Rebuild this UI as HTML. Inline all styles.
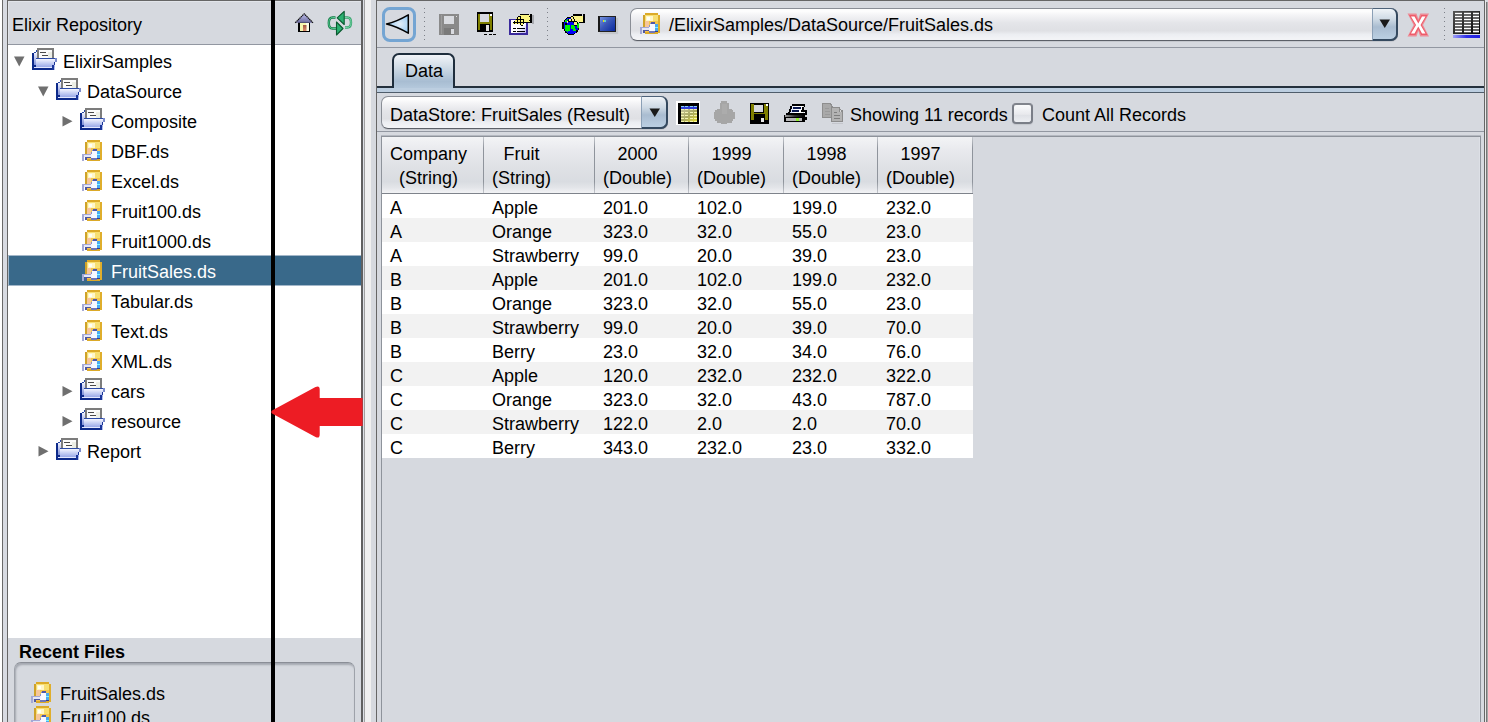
<!DOCTYPE html>
<html><head><meta charset="utf-8">
<style>
*{margin:0;padding:0;box-sizing:border-box}
html,body{width:1488px;height:722px;overflow:hidden;background:#d6d9df;font-family:"Liberation Sans",sans-serif;font-size:18px;color:#000}
.a{position:absolute}
.t{position:absolute;white-space:pre;line-height:24px;font-size:18px}
.r{position:absolute;background:#000}
</style></head><body>
<!-- ===== LEFT PANEL ===== -->
<div class="a" style="left:0;top:0;width:2px;height:722px;background:#fff"></div>
<div class="a" style="left:2px;top:0;width:1px;height:722px;background:#6a6a6a"></div>
<div class="a" style="left:3px;top:0;width:4px;height:722px;background:#d8dbe2"></div>
<div class="a" style="left:7px;top:0;width:1px;height:722px;background:#666"></div>
<div class="a" style="left:7px;top:0;width:355px;height:1px;background:#666"></div>
<div class="a" style="left:8px;top:1px;width:353px;height:43px;background:#d6d9df;border-top:1px solid #e2e5ea;border-left:1px solid #e2e5ea"></div>
<div class="a" style="left:8px;top:44px;width:353px;height:1px;background:#9297a1"></div>
<div class="a" style="left:8px;top:45px;width:353px;height:593px;background:#fff"></div>
<div class="a" style="left:8px;top:638px;width:353px;height:84px;background:#d6d9df"></div>
<div class="a" style="left:361px;top:0;width:2px;height:722px;background:#606060"></div>
<div class="a" style="left:363px;top:0;width:1px;height:722px;background:#dcdfe5"></div>
<div class="a" style="left:364px;top:0;width:1px;height:722px;background:#a0a0a0"></div>
<div class="a" style="left:365px;top:0;width:6px;height:722px;background:#f0f0f0"></div>
<div class="a" style="left:371px;top:0;width:5px;height:722px;background:#d6d9df"></div>
<div class="a" style="left:376px;top:0;width:1px;height:722px;background:#666"></div>

<div class="t" style="left:12px;top:13px">Elixir Repository</div>

<svg class="a" style="left:293px;top:11px" width="22" height="22" viewBox="293 11 22 22">
<defs><linearGradient id="rf" x1="0" y1="0" x2="0" y2="1"><stop offset="0" stop-color="#c0c0f0"/><stop offset="1" stop-color="#6a6a9c"/></linearGradient>
<linearGradient id="dr" x1="0" y1="0" x2="0" y2="1"><stop offset="0" stop-color="#a05840"/><stop offset="1" stop-color="#e09070"/></linearGradient></defs>
<rect x="298" y="22" width="12" height="10" fill="#000"/>
<rect x="300" y="23" width="9" height="8" fill="#f4f6b0"/>
<rect x="306" y="23" width="3" height="8" fill="#fbfde8"/>
<rect x="303" y="25" width="3.5" height="6" fill="url(#dr)"/>
<path d="M295.2,22.8 L304.2,13.8 L313,22.8 Z" fill="url(#rf)"/><path d="M295.2,22.8 L304.2,13.8 L313,22.8" fill="none" stroke="#111" stroke-width="1.2" stroke-dasharray="1.5 0.5"/>
</svg>
<svg class="a" style="left:326px;top:9px" width="28" height="28" viewBox="0 0 28 28">
<path d="M9.5,8.5 H6.5 C3.8,8.5 2.8,11 2.8,14 C2.8,17 3.8,19.5 6.5,19.5 H11" fill="none" stroke="#127a45" stroke-width="2.4"/>
<path d="M9.5,8.5 H6.5 C3.8,8.5 2.8,11 2.8,14 C2.8,17 3.8,19.5 6.5,19.5 H11" fill="none" stroke="#5fd09a" stroke-width="0.9"/>
<path d="M18,8.5 H21.5 C24,8.5 25,11 25,13.5 C25,16 24,18.5 21.5,18.5 H19" fill="none" stroke="#1f9a5c" stroke-width="2.4" opacity="0.85"/>
<path d="M18,8.5 H21.5 C24,8.5 25,11 25,13.5 C25,16 24,18.5 21.5,18.5 H19" fill="none" stroke="#7ad8aa" stroke-width="0.9"/>
<path d="M11.2,8.8 L18.2,2.3 L18.2,15.5 Z" fill="#2bb070" stroke="#0a5a30" stroke-width="1.1" stroke-linejoin="round"/>
<path d="M17,19.5 L10.5,13 L10.5,26 Z" fill="#2bb070" stroke="#0a5a30" stroke-width="1.1" stroke-linejoin="round"/>
</svg>
<!-- tree -->
<svg width="0" height="0" style="position:absolute"><defs><linearGradient id="fg" x1="0" y1="0" x2="0" y2="1"><stop offset="0" stop-color="#f4f6ff"/><stop offset="1" stop-color="#9aaae8"/></linearGradient><linearGradient id="fs" x1="0" y1="0" x2="0" y2="1"><stop offset="0" stop-color="#f0f2ff"/><stop offset="1" stop-color="#7f90d8"/></linearGradient></defs></svg><svg class="a" style="left:14px;top:56px" width="11" height="11" viewBox="0 0 11 11"><path d="M0,0.5 L10.5,0.5 L5.25,10.5 Z" fill="#6f6f6f"/></svg>
<svg class="a" style="left:32px;top:48px" width="26" height="23" viewBox="0 0 26 23" shape-rendering="crispEdges">
<rect x="5" y="0" width="17" height="11" fill="#7c7c7c"/>
<rect x="7" y="2" width="13" height="9" fill="#fbfbfb"/>
<rect x="16" y="4" width="4" height="6" fill="#eceee6"/>
<rect x="8" y="4" width="6" height="1" fill="#4a4a4a"/>
<rect x="10" y="7" width="6" height="1" fill="#4a4a4a"/>
<rect x="4" y="2" width="1" height="2" fill="#2b4aa5"/>
<rect x="2" y="4" width="2" height="1" fill="#2b4aa5"/>
<rect x="0" y="5" width="2" height="17" fill="#0d2a8a"/>
<rect x="2" y="5" width="3" height="12" fill="url(#fs)"/>
<rect x="2" y="17" width="2" height="2" fill="#0d2a8a"/>
<rect x="4" y="10" width="21" height="1" fill="#2b4aa5"/>
<rect x="4" y="11" width="19" height="8" fill="url(#fg)"/>
<rect x="2" y="19" width="19" height="1" fill="#e4e8ff"/>
<rect x="23" y="10" width="2" height="4" fill="#7a8acb"/>
<rect x="22" y="14" width="1" height="3" fill="#1a3599"/>
<rect x="20" y="17" width="2" height="5" fill="#1a3599"/>
<rect x="22" y="19" width="1" height="3" fill="#b4c0ee"/>
<rect x="0" y="20" width="20" height="2" fill="#0d2a8a"/>
</svg>
<div class="t" style="left:63px;top:50px;color:#000">ElixirSamples</div>
<svg class="a" style="left:38px;top:86px" width="11" height="11" viewBox="0 0 11 11"><path d="M0,0.5 L10.5,0.5 L5.25,10.5 Z" fill="#6f6f6f"/></svg>
<svg class="a" style="left:56px;top:78px" width="26" height="23" viewBox="0 0 26 23" shape-rendering="crispEdges">
<rect x="5" y="0" width="17" height="11" fill="#7c7c7c"/>
<rect x="7" y="2" width="13" height="9" fill="#fbfbfb"/>
<rect x="16" y="4" width="4" height="6" fill="#eceee6"/>
<rect x="8" y="4" width="6" height="1" fill="#4a4a4a"/>
<rect x="10" y="7" width="6" height="1" fill="#4a4a4a"/>
<rect x="4" y="2" width="1" height="2" fill="#2b4aa5"/>
<rect x="2" y="4" width="2" height="1" fill="#2b4aa5"/>
<rect x="0" y="5" width="2" height="17" fill="#0d2a8a"/>
<rect x="2" y="5" width="3" height="12" fill="url(#fs)"/>
<rect x="2" y="17" width="2" height="2" fill="#0d2a8a"/>
<rect x="4" y="10" width="21" height="1" fill="#2b4aa5"/>
<rect x="4" y="11" width="19" height="8" fill="url(#fg)"/>
<rect x="2" y="19" width="19" height="1" fill="#e4e8ff"/>
<rect x="23" y="10" width="2" height="4" fill="#7a8acb"/>
<rect x="22" y="14" width="1" height="3" fill="#1a3599"/>
<rect x="20" y="17" width="2" height="5" fill="#1a3599"/>
<rect x="22" y="19" width="1" height="3" fill="#b4c0ee"/>
<rect x="0" y="20" width="20" height="2" fill="#0d2a8a"/>
</svg>
<div class="t" style="left:87px;top:80px;color:#000">DataSource</div>
<svg class="a" style="left:62px;top:116px" width="11" height="11" viewBox="0 0 11 11"><path d="M0.5,0 L10.5,5.25 L0.5,10.5 Z" fill="#6f6f6f"/></svg>
<svg class="a" style="left:80px;top:108px" width="26" height="23" viewBox="0 0 26 23" shape-rendering="crispEdges">
<rect x="5" y="0" width="17" height="11" fill="#7c7c7c"/>
<rect x="7" y="2" width="13" height="9" fill="#fbfbfb"/>
<rect x="16" y="4" width="4" height="6" fill="#eceee6"/>
<rect x="8" y="4" width="6" height="1" fill="#4a4a4a"/>
<rect x="10" y="7" width="6" height="1" fill="#4a4a4a"/>
<rect x="4" y="2" width="1" height="2" fill="#2b4aa5"/>
<rect x="2" y="4" width="2" height="1" fill="#2b4aa5"/>
<rect x="0" y="5" width="2" height="17" fill="#0d2a8a"/>
<rect x="2" y="5" width="3" height="12" fill="url(#fs)"/>
<rect x="2" y="17" width="2" height="2" fill="#0d2a8a"/>
<rect x="4" y="10" width="21" height="1" fill="#2b4aa5"/>
<rect x="4" y="11" width="19" height="8" fill="url(#fg)"/>
<rect x="2" y="19" width="19" height="1" fill="#e4e8ff"/>
<rect x="23" y="10" width="2" height="4" fill="#7a8acb"/>
<rect x="22" y="14" width="1" height="3" fill="#1a3599"/>
<rect x="20" y="17" width="2" height="5" fill="#1a3599"/>
<rect x="22" y="19" width="1" height="3" fill="#b4c0ee"/>
<rect x="0" y="20" width="20" height="2" fill="#0d2a8a"/>
</svg>
<div class="t" style="left:111px;top:110px;color:#000">Composite</div>
<svg class="a" style="left:82px;top:140px" width="21" height="22" viewBox="0 0 21 22" shape-rendering="crispEdges">
<rect x="5" y="0" width="13" height="2" fill="#dcaa28"/>
<rect x="3" y="2" width="2" height="18" fill="#cfa22a"/>
<rect x="18" y="2" width="2" height="18" fill="#dfae2c"/>
<rect x="5" y="2" width="13" height="7" fill="#f7df72"/>
<rect x="6" y="3" width="7" height="5" fill="#fff6c8"/>
<rect x="7" y="4" width="3" height="3" fill="#fffff4"/>
<rect x="5" y="8" width="13" height="11" fill="#f2c64c"/>
<rect x="5" y="8" width="4" height="6" fill="#f6c79c"/>
<rect x="5" y="19" width="13" height="2" fill="#dcaa28"/>
<rect x="11" y="9" width="4" height="2" fill="#5058a8"/>
<rect x="10" y="10" width="1" height="2" fill="#8a92cc"/>
<rect x="9" y="12" width="1" height="2" fill="#8a92cc"/>
<rect x="10" y="11" width="5" height="8" fill="#f8f8ff"/>
<rect x="9" y="14" width="1" height="5" fill="#f0f0ff"/>
<rect x="15" y="11" width="3" height="8" fill="#4aa8f0"/>
<rect x="15" y="14" width="3" height="1" fill="#80f6ff"/>
<rect x="15" y="18" width="3" height="1" fill="#343c90"/>
<rect x="9" y="18" width="6" height="2" fill="#7078b8"/>
<rect x="0" y="14" width="9" height="1" fill="#a4a8d6"/>
<rect x="0" y="15" width="2" height="6" fill="#a4a8d6"/>
<rect x="2" y="15" width="7" height="2" fill="#e6e8f8"/>
<rect x="3" y="17" width="6" height="1" fill="#5058a0"/>
<rect x="3" y="18" width="2" height="2" fill="#5058a0"/>
<rect x="5" y="18" width="4" height="1" fill="#f6c050"/>
</svg>
<div class="t" style="left:111px;top:140px;color:#000">DBF.ds</div>
<svg class="a" style="left:82px;top:170px" width="21" height="22" viewBox="0 0 21 22" shape-rendering="crispEdges">
<rect x="5" y="0" width="13" height="2" fill="#dcaa28"/>
<rect x="3" y="2" width="2" height="18" fill="#cfa22a"/>
<rect x="18" y="2" width="2" height="18" fill="#dfae2c"/>
<rect x="5" y="2" width="13" height="7" fill="#f7df72"/>
<rect x="6" y="3" width="7" height="5" fill="#fff6c8"/>
<rect x="7" y="4" width="3" height="3" fill="#fffff4"/>
<rect x="5" y="8" width="13" height="11" fill="#f2c64c"/>
<rect x="5" y="8" width="4" height="6" fill="#f6c79c"/>
<rect x="5" y="19" width="13" height="2" fill="#dcaa28"/>
<rect x="11" y="9" width="4" height="2" fill="#5058a8"/>
<rect x="10" y="10" width="1" height="2" fill="#8a92cc"/>
<rect x="9" y="12" width="1" height="2" fill="#8a92cc"/>
<rect x="10" y="11" width="5" height="8" fill="#f8f8ff"/>
<rect x="9" y="14" width="1" height="5" fill="#f0f0ff"/>
<rect x="15" y="11" width="3" height="8" fill="#4aa8f0"/>
<rect x="15" y="14" width="3" height="1" fill="#80f6ff"/>
<rect x="15" y="18" width="3" height="1" fill="#343c90"/>
<rect x="9" y="18" width="6" height="2" fill="#7078b8"/>
<rect x="0" y="14" width="9" height="1" fill="#a4a8d6"/>
<rect x="0" y="15" width="2" height="6" fill="#a4a8d6"/>
<rect x="2" y="15" width="7" height="2" fill="#e6e8f8"/>
<rect x="3" y="17" width="6" height="1" fill="#5058a0"/>
<rect x="3" y="18" width="2" height="2" fill="#5058a0"/>
<rect x="5" y="18" width="4" height="1" fill="#f6c050"/>
</svg>
<div class="t" style="left:111px;top:170px;color:#000">Excel.ds</div>
<svg class="a" style="left:82px;top:200px" width="21" height="22" viewBox="0 0 21 22" shape-rendering="crispEdges">
<rect x="5" y="0" width="13" height="2" fill="#dcaa28"/>
<rect x="3" y="2" width="2" height="18" fill="#cfa22a"/>
<rect x="18" y="2" width="2" height="18" fill="#dfae2c"/>
<rect x="5" y="2" width="13" height="7" fill="#f7df72"/>
<rect x="6" y="3" width="7" height="5" fill="#fff6c8"/>
<rect x="7" y="4" width="3" height="3" fill="#fffff4"/>
<rect x="5" y="8" width="13" height="11" fill="#f2c64c"/>
<rect x="5" y="8" width="4" height="6" fill="#f6c79c"/>
<rect x="5" y="19" width="13" height="2" fill="#dcaa28"/>
<rect x="11" y="9" width="4" height="2" fill="#5058a8"/>
<rect x="10" y="10" width="1" height="2" fill="#8a92cc"/>
<rect x="9" y="12" width="1" height="2" fill="#8a92cc"/>
<rect x="10" y="11" width="5" height="8" fill="#f8f8ff"/>
<rect x="9" y="14" width="1" height="5" fill="#f0f0ff"/>
<rect x="15" y="11" width="3" height="8" fill="#4aa8f0"/>
<rect x="15" y="14" width="3" height="1" fill="#80f6ff"/>
<rect x="15" y="18" width="3" height="1" fill="#343c90"/>
<rect x="9" y="18" width="6" height="2" fill="#7078b8"/>
<rect x="0" y="14" width="9" height="1" fill="#a4a8d6"/>
<rect x="0" y="15" width="2" height="6" fill="#a4a8d6"/>
<rect x="2" y="15" width="7" height="2" fill="#e6e8f8"/>
<rect x="3" y="17" width="6" height="1" fill="#5058a0"/>
<rect x="3" y="18" width="2" height="2" fill="#5058a0"/>
<rect x="5" y="18" width="4" height="1" fill="#f6c050"/>
</svg>
<div class="t" style="left:111px;top:200px;color:#000">Fruit100.ds</div>
<svg class="a" style="left:82px;top:230px" width="21" height="22" viewBox="0 0 21 22" shape-rendering="crispEdges">
<rect x="5" y="0" width="13" height="2" fill="#dcaa28"/>
<rect x="3" y="2" width="2" height="18" fill="#cfa22a"/>
<rect x="18" y="2" width="2" height="18" fill="#dfae2c"/>
<rect x="5" y="2" width="13" height="7" fill="#f7df72"/>
<rect x="6" y="3" width="7" height="5" fill="#fff6c8"/>
<rect x="7" y="4" width="3" height="3" fill="#fffff4"/>
<rect x="5" y="8" width="13" height="11" fill="#f2c64c"/>
<rect x="5" y="8" width="4" height="6" fill="#f6c79c"/>
<rect x="5" y="19" width="13" height="2" fill="#dcaa28"/>
<rect x="11" y="9" width="4" height="2" fill="#5058a8"/>
<rect x="10" y="10" width="1" height="2" fill="#8a92cc"/>
<rect x="9" y="12" width="1" height="2" fill="#8a92cc"/>
<rect x="10" y="11" width="5" height="8" fill="#f8f8ff"/>
<rect x="9" y="14" width="1" height="5" fill="#f0f0ff"/>
<rect x="15" y="11" width="3" height="8" fill="#4aa8f0"/>
<rect x="15" y="14" width="3" height="1" fill="#80f6ff"/>
<rect x="15" y="18" width="3" height="1" fill="#343c90"/>
<rect x="9" y="18" width="6" height="2" fill="#7078b8"/>
<rect x="0" y="14" width="9" height="1" fill="#a4a8d6"/>
<rect x="0" y="15" width="2" height="6" fill="#a4a8d6"/>
<rect x="2" y="15" width="7" height="2" fill="#e6e8f8"/>
<rect x="3" y="17" width="6" height="1" fill="#5058a0"/>
<rect x="3" y="18" width="2" height="2" fill="#5058a0"/>
<rect x="5" y="18" width="4" height="1" fill="#f6c050"/>
</svg>
<div class="t" style="left:111px;top:230px;color:#000">Fruit1000.ds</div>
<div class="a" style="left:8px;top:255px;width:353px;height:31px;background:#a3b7c9"></div>
<div class="a" style="left:9px;top:256px;width:352px;height:29px;background:#39698a"></div>
<svg class="a" style="left:82px;top:260px" width="21" height="22" viewBox="0 0 21 22" shape-rendering="crispEdges">
<rect x="5" y="0" width="13" height="2" fill="#dcaa28"/>
<rect x="3" y="2" width="2" height="18" fill="#cfa22a"/>
<rect x="18" y="2" width="2" height="18" fill="#dfae2c"/>
<rect x="5" y="2" width="13" height="7" fill="#f7df72"/>
<rect x="6" y="3" width="7" height="5" fill="#fff6c8"/>
<rect x="7" y="4" width="3" height="3" fill="#fffff4"/>
<rect x="5" y="8" width="13" height="11" fill="#f2c64c"/>
<rect x="5" y="8" width="4" height="6" fill="#f6c79c"/>
<rect x="5" y="19" width="13" height="2" fill="#dcaa28"/>
<rect x="11" y="9" width="4" height="2" fill="#5058a8"/>
<rect x="10" y="10" width="1" height="2" fill="#8a92cc"/>
<rect x="9" y="12" width="1" height="2" fill="#8a92cc"/>
<rect x="10" y="11" width="5" height="8" fill="#f8f8ff"/>
<rect x="9" y="14" width="1" height="5" fill="#f0f0ff"/>
<rect x="15" y="11" width="3" height="8" fill="#4aa8f0"/>
<rect x="15" y="14" width="3" height="1" fill="#80f6ff"/>
<rect x="15" y="18" width="3" height="1" fill="#343c90"/>
<rect x="9" y="18" width="6" height="2" fill="#7078b8"/>
<rect x="0" y="14" width="9" height="1" fill="#a4a8d6"/>
<rect x="0" y="15" width="2" height="6" fill="#a4a8d6"/>
<rect x="2" y="15" width="7" height="2" fill="#e6e8f8"/>
<rect x="3" y="17" width="6" height="1" fill="#5058a0"/>
<rect x="3" y="18" width="2" height="2" fill="#5058a0"/>
<rect x="5" y="18" width="4" height="1" fill="#f6c050"/>
</svg>
<div class="t" style="left:111px;top:260px;color:#fff">FruitSales.ds</div>
<svg class="a" style="left:82px;top:290px" width="21" height="22" viewBox="0 0 21 22" shape-rendering="crispEdges">
<rect x="5" y="0" width="13" height="2" fill="#dcaa28"/>
<rect x="3" y="2" width="2" height="18" fill="#cfa22a"/>
<rect x="18" y="2" width="2" height="18" fill="#dfae2c"/>
<rect x="5" y="2" width="13" height="7" fill="#f7df72"/>
<rect x="6" y="3" width="7" height="5" fill="#fff6c8"/>
<rect x="7" y="4" width="3" height="3" fill="#fffff4"/>
<rect x="5" y="8" width="13" height="11" fill="#f2c64c"/>
<rect x="5" y="8" width="4" height="6" fill="#f6c79c"/>
<rect x="5" y="19" width="13" height="2" fill="#dcaa28"/>
<rect x="11" y="9" width="4" height="2" fill="#5058a8"/>
<rect x="10" y="10" width="1" height="2" fill="#8a92cc"/>
<rect x="9" y="12" width="1" height="2" fill="#8a92cc"/>
<rect x="10" y="11" width="5" height="8" fill="#f8f8ff"/>
<rect x="9" y="14" width="1" height="5" fill="#f0f0ff"/>
<rect x="15" y="11" width="3" height="8" fill="#4aa8f0"/>
<rect x="15" y="14" width="3" height="1" fill="#80f6ff"/>
<rect x="15" y="18" width="3" height="1" fill="#343c90"/>
<rect x="9" y="18" width="6" height="2" fill="#7078b8"/>
<rect x="0" y="14" width="9" height="1" fill="#a4a8d6"/>
<rect x="0" y="15" width="2" height="6" fill="#a4a8d6"/>
<rect x="2" y="15" width="7" height="2" fill="#e6e8f8"/>
<rect x="3" y="17" width="6" height="1" fill="#5058a0"/>
<rect x="3" y="18" width="2" height="2" fill="#5058a0"/>
<rect x="5" y="18" width="4" height="1" fill="#f6c050"/>
</svg>
<div class="t" style="left:111px;top:290px;color:#000">Tabular.ds</div>
<svg class="a" style="left:82px;top:320px" width="21" height="22" viewBox="0 0 21 22" shape-rendering="crispEdges">
<rect x="5" y="0" width="13" height="2" fill="#dcaa28"/>
<rect x="3" y="2" width="2" height="18" fill="#cfa22a"/>
<rect x="18" y="2" width="2" height="18" fill="#dfae2c"/>
<rect x="5" y="2" width="13" height="7" fill="#f7df72"/>
<rect x="6" y="3" width="7" height="5" fill="#fff6c8"/>
<rect x="7" y="4" width="3" height="3" fill="#fffff4"/>
<rect x="5" y="8" width="13" height="11" fill="#f2c64c"/>
<rect x="5" y="8" width="4" height="6" fill="#f6c79c"/>
<rect x="5" y="19" width="13" height="2" fill="#dcaa28"/>
<rect x="11" y="9" width="4" height="2" fill="#5058a8"/>
<rect x="10" y="10" width="1" height="2" fill="#8a92cc"/>
<rect x="9" y="12" width="1" height="2" fill="#8a92cc"/>
<rect x="10" y="11" width="5" height="8" fill="#f8f8ff"/>
<rect x="9" y="14" width="1" height="5" fill="#f0f0ff"/>
<rect x="15" y="11" width="3" height="8" fill="#4aa8f0"/>
<rect x="15" y="14" width="3" height="1" fill="#80f6ff"/>
<rect x="15" y="18" width="3" height="1" fill="#343c90"/>
<rect x="9" y="18" width="6" height="2" fill="#7078b8"/>
<rect x="0" y="14" width="9" height="1" fill="#a4a8d6"/>
<rect x="0" y="15" width="2" height="6" fill="#a4a8d6"/>
<rect x="2" y="15" width="7" height="2" fill="#e6e8f8"/>
<rect x="3" y="17" width="6" height="1" fill="#5058a0"/>
<rect x="3" y="18" width="2" height="2" fill="#5058a0"/>
<rect x="5" y="18" width="4" height="1" fill="#f6c050"/>
</svg>
<div class="t" style="left:111px;top:320px;color:#000">Text.ds</div>
<svg class="a" style="left:82px;top:350px" width="21" height="22" viewBox="0 0 21 22" shape-rendering="crispEdges">
<rect x="5" y="0" width="13" height="2" fill="#dcaa28"/>
<rect x="3" y="2" width="2" height="18" fill="#cfa22a"/>
<rect x="18" y="2" width="2" height="18" fill="#dfae2c"/>
<rect x="5" y="2" width="13" height="7" fill="#f7df72"/>
<rect x="6" y="3" width="7" height="5" fill="#fff6c8"/>
<rect x="7" y="4" width="3" height="3" fill="#fffff4"/>
<rect x="5" y="8" width="13" height="11" fill="#f2c64c"/>
<rect x="5" y="8" width="4" height="6" fill="#f6c79c"/>
<rect x="5" y="19" width="13" height="2" fill="#dcaa28"/>
<rect x="11" y="9" width="4" height="2" fill="#5058a8"/>
<rect x="10" y="10" width="1" height="2" fill="#8a92cc"/>
<rect x="9" y="12" width="1" height="2" fill="#8a92cc"/>
<rect x="10" y="11" width="5" height="8" fill="#f8f8ff"/>
<rect x="9" y="14" width="1" height="5" fill="#f0f0ff"/>
<rect x="15" y="11" width="3" height="8" fill="#4aa8f0"/>
<rect x="15" y="14" width="3" height="1" fill="#80f6ff"/>
<rect x="15" y="18" width="3" height="1" fill="#343c90"/>
<rect x="9" y="18" width="6" height="2" fill="#7078b8"/>
<rect x="0" y="14" width="9" height="1" fill="#a4a8d6"/>
<rect x="0" y="15" width="2" height="6" fill="#a4a8d6"/>
<rect x="2" y="15" width="7" height="2" fill="#e6e8f8"/>
<rect x="3" y="17" width="6" height="1" fill="#5058a0"/>
<rect x="3" y="18" width="2" height="2" fill="#5058a0"/>
<rect x="5" y="18" width="4" height="1" fill="#f6c050"/>
</svg>
<div class="t" style="left:111px;top:350px;color:#000">XML.ds</div>
<svg class="a" style="left:62px;top:386px" width="11" height="11" viewBox="0 0 11 11"><path d="M0.5,0 L10.5,5.25 L0.5,10.5 Z" fill="#6f6f6f"/></svg>
<svg class="a" style="left:80px;top:378px" width="26" height="23" viewBox="0 0 26 23" shape-rendering="crispEdges">
<rect x="5" y="0" width="17" height="11" fill="#7c7c7c"/>
<rect x="7" y="2" width="13" height="9" fill="#fbfbfb"/>
<rect x="16" y="4" width="4" height="6" fill="#eceee6"/>
<rect x="8" y="4" width="6" height="1" fill="#4a4a4a"/>
<rect x="10" y="7" width="6" height="1" fill="#4a4a4a"/>
<rect x="4" y="2" width="1" height="2" fill="#2b4aa5"/>
<rect x="2" y="4" width="2" height="1" fill="#2b4aa5"/>
<rect x="0" y="5" width="2" height="17" fill="#0d2a8a"/>
<rect x="2" y="5" width="3" height="12" fill="url(#fs)"/>
<rect x="2" y="17" width="2" height="2" fill="#0d2a8a"/>
<rect x="4" y="10" width="21" height="1" fill="#2b4aa5"/>
<rect x="4" y="11" width="19" height="8" fill="url(#fg)"/>
<rect x="2" y="19" width="19" height="1" fill="#e4e8ff"/>
<rect x="23" y="10" width="2" height="4" fill="#7a8acb"/>
<rect x="22" y="14" width="1" height="3" fill="#1a3599"/>
<rect x="20" y="17" width="2" height="5" fill="#1a3599"/>
<rect x="22" y="19" width="1" height="3" fill="#b4c0ee"/>
<rect x="0" y="20" width="20" height="2" fill="#0d2a8a"/>
</svg>
<div class="t" style="left:111px;top:380px;color:#000">cars</div>
<svg class="a" style="left:62px;top:416px" width="11" height="11" viewBox="0 0 11 11"><path d="M0.5,0 L10.5,5.25 L0.5,10.5 Z" fill="#6f6f6f"/></svg>
<svg class="a" style="left:80px;top:408px" width="26" height="23" viewBox="0 0 26 23" shape-rendering="crispEdges">
<rect x="5" y="0" width="17" height="11" fill="#7c7c7c"/>
<rect x="7" y="2" width="13" height="9" fill="#fbfbfb"/>
<rect x="16" y="4" width="4" height="6" fill="#eceee6"/>
<rect x="8" y="4" width="6" height="1" fill="#4a4a4a"/>
<rect x="10" y="7" width="6" height="1" fill="#4a4a4a"/>
<rect x="4" y="2" width="1" height="2" fill="#2b4aa5"/>
<rect x="2" y="4" width="2" height="1" fill="#2b4aa5"/>
<rect x="0" y="5" width="2" height="17" fill="#0d2a8a"/>
<rect x="2" y="5" width="3" height="12" fill="url(#fs)"/>
<rect x="2" y="17" width="2" height="2" fill="#0d2a8a"/>
<rect x="4" y="10" width="21" height="1" fill="#2b4aa5"/>
<rect x="4" y="11" width="19" height="8" fill="url(#fg)"/>
<rect x="2" y="19" width="19" height="1" fill="#e4e8ff"/>
<rect x="23" y="10" width="2" height="4" fill="#7a8acb"/>
<rect x="22" y="14" width="1" height="3" fill="#1a3599"/>
<rect x="20" y="17" width="2" height="5" fill="#1a3599"/>
<rect x="22" y="19" width="1" height="3" fill="#b4c0ee"/>
<rect x="0" y="20" width="20" height="2" fill="#0d2a8a"/>
</svg>
<div class="t" style="left:111px;top:410px;color:#000">resource</div>
<svg class="a" style="left:38px;top:446px" width="11" height="11" viewBox="0 0 11 11"><path d="M0.5,0 L10.5,5.25 L0.5,10.5 Z" fill="#6f6f6f"/></svg>
<svg class="a" style="left:56px;top:438px" width="26" height="23" viewBox="0 0 26 23" shape-rendering="crispEdges">
<rect x="5" y="0" width="17" height="11" fill="#7c7c7c"/>
<rect x="7" y="2" width="13" height="9" fill="#fbfbfb"/>
<rect x="16" y="4" width="4" height="6" fill="#eceee6"/>
<rect x="8" y="4" width="6" height="1" fill="#4a4a4a"/>
<rect x="10" y="7" width="6" height="1" fill="#4a4a4a"/>
<rect x="4" y="2" width="1" height="2" fill="#2b4aa5"/>
<rect x="2" y="4" width="2" height="1" fill="#2b4aa5"/>
<rect x="0" y="5" width="2" height="17" fill="#0d2a8a"/>
<rect x="2" y="5" width="3" height="12" fill="url(#fs)"/>
<rect x="2" y="17" width="2" height="2" fill="#0d2a8a"/>
<rect x="4" y="10" width="21" height="1" fill="#2b4aa5"/>
<rect x="4" y="11" width="19" height="8" fill="url(#fg)"/>
<rect x="2" y="19" width="19" height="1" fill="#e4e8ff"/>
<rect x="23" y="10" width="2" height="4" fill="#7a8acb"/>
<rect x="22" y="14" width="1" height="3" fill="#1a3599"/>
<rect x="20" y="17" width="2" height="5" fill="#1a3599"/>
<rect x="22" y="19" width="1" height="3" fill="#b4c0ee"/>
<rect x="0" y="20" width="20" height="2" fill="#0d2a8a"/>
</svg>
<div class="t" style="left:87px;top:440px;color:#000">Report</div>
<div class="t" style="left:19px;top:640px;font-weight:bold">Recent Files</div>
<div class="a" style="left:14px;top:662px;width:341px;height:80px;border:1px solid #9ea2aa;border-top-color:#8a8e96;border-radius:7px;background:#d6d9df;box-shadow:inset 1px 2px 2px #a4a8b0"></div>
<svg class="a" style="left:31px;top:682px" width="21" height="22" viewBox="0 0 21 22" shape-rendering="crispEdges">
<rect x="5" y="0" width="13" height="2" fill="#dcaa28"/>
<rect x="3" y="2" width="2" height="18" fill="#cfa22a"/>
<rect x="18" y="2" width="2" height="18" fill="#dfae2c"/>
<rect x="5" y="2" width="13" height="7" fill="#f7df72"/>
<rect x="6" y="3" width="7" height="5" fill="#fff6c8"/>
<rect x="7" y="4" width="3" height="3" fill="#fffff4"/>
<rect x="5" y="8" width="13" height="11" fill="#f2c64c"/>
<rect x="5" y="8" width="4" height="6" fill="#f6c79c"/>
<rect x="5" y="19" width="13" height="2" fill="#dcaa28"/>
<rect x="11" y="9" width="4" height="2" fill="#5058a8"/>
<rect x="10" y="10" width="1" height="2" fill="#8a92cc"/>
<rect x="9" y="12" width="1" height="2" fill="#8a92cc"/>
<rect x="10" y="11" width="5" height="8" fill="#f8f8ff"/>
<rect x="9" y="14" width="1" height="5" fill="#f0f0ff"/>
<rect x="15" y="11" width="3" height="8" fill="#4aa8f0"/>
<rect x="15" y="14" width="3" height="1" fill="#80f6ff"/>
<rect x="15" y="18" width="3" height="1" fill="#343c90"/>
<rect x="9" y="18" width="6" height="2" fill="#7078b8"/>
<rect x="0" y="14" width="9" height="1" fill="#a4a8d6"/>
<rect x="0" y="15" width="2" height="6" fill="#a4a8d6"/>
<rect x="2" y="15" width="7" height="2" fill="#e6e8f8"/>
<rect x="3" y="17" width="6" height="1" fill="#5058a0"/>
<rect x="3" y="18" width="2" height="2" fill="#5058a0"/>
<rect x="5" y="18" width="4" height="1" fill="#f6c050"/>
</svg>
<div class="t" style="left:60px;top:682px">FruitSales.ds</div>
<svg class="a" style="left:31px;top:706px" width="21" height="22" viewBox="0 0 21 22" shape-rendering="crispEdges">
<rect x="5" y="0" width="13" height="2" fill="#dcaa28"/>
<rect x="3" y="2" width="2" height="18" fill="#cfa22a"/>
<rect x="18" y="2" width="2" height="18" fill="#dfae2c"/>
<rect x="5" y="2" width="13" height="7" fill="#f7df72"/>
<rect x="6" y="3" width="7" height="5" fill="#fff6c8"/>
<rect x="7" y="4" width="3" height="3" fill="#fffff4"/>
<rect x="5" y="8" width="13" height="11" fill="#f2c64c"/>
<rect x="5" y="8" width="4" height="6" fill="#f6c79c"/>
<rect x="5" y="19" width="13" height="2" fill="#dcaa28"/>
<rect x="11" y="9" width="4" height="2" fill="#5058a8"/>
<rect x="10" y="10" width="1" height="2" fill="#8a92cc"/>
<rect x="9" y="12" width="1" height="2" fill="#8a92cc"/>
<rect x="10" y="11" width="5" height="8" fill="#f8f8ff"/>
<rect x="9" y="14" width="1" height="5" fill="#f0f0ff"/>
<rect x="15" y="11" width="3" height="8" fill="#4aa8f0"/>
<rect x="15" y="14" width="3" height="1" fill="#80f6ff"/>
<rect x="15" y="18" width="3" height="1" fill="#343c90"/>
<rect x="9" y="18" width="6" height="2" fill="#7078b8"/>
<rect x="0" y="14" width="9" height="1" fill="#a4a8d6"/>
<rect x="0" y="15" width="2" height="6" fill="#a4a8d6"/>
<rect x="2" y="15" width="7" height="2" fill="#e6e8f8"/>
<rect x="3" y="17" width="6" height="1" fill="#5058a0"/>
<rect x="3" y="18" width="2" height="2" fill="#5058a0"/>
<rect x="5" y="18" width="4" height="1" fill="#f6c050"/>
</svg>
<div class="t" style="left:60px;top:706px">Fruit100.ds</div>

<!-- ===== RIGHT PANEL ===== -->
<div class="a" style="left:377px;top:0;width:1107px;height:1px;background:#666"></div>
<div class="a" style="left:377px;top:47px;width:1107px;height:1px;background:#9297a1"></div>
<div class="a" style="left:1484px;top:0;width:1px;height:722px;background:#666"></div>
<div class="a" style="left:1485px;top:0;width:1px;height:722px;background:#e8e8e8"></div>
<div class="a" style="left:1486px;top:2px;width:1px;height:720px;background:#777"></div>
<div class="a" style="left:1487px;top:2px;width:1px;height:720px;background:#a8a8a8"></div>

<div class="a" style="left:382px;top:7px;width:34px;height:35px;border:3px solid #74a5d3;border-radius:8px"></div>
<svg class="a" style="left:380px;top:10px" width="34" height="28" viewBox="380 10 34 28"><defs><radialGradient id="bk" cx="0.6" cy="0.5" r="0.6"><stop offset="0" stop-color="#e4eef8"/><stop offset="1" stop-color="#90c8f4"/></radialGradient></defs><path d="M386.5,24 Q397,21.5 408.3,14.8 L408.3,33.2 Q397,26.5 386.5,24 Z" fill="url(#bk)" stroke="#000" stroke-width="1.5" stroke-linejoin="round"/></svg>
<div class="a" style="left:424px;top:8px;width:1px;height:1px;background:#7d8189"></div><div class="a" style="left:424px;top:12px;width:1px;height:1px;background:#7d8189"></div><div class="a" style="left:424px;top:17px;width:1px;height:1px;background:#7d8189"></div><div class="a" style="left:424px;top:21px;width:1px;height:1px;background:#7d8189"></div><div class="a" style="left:424px;top:26px;width:1px;height:1px;background:#7d8189"></div><div class="a" style="left:424px;top:30px;width:1px;height:1px;background:#7d8189"></div><div class="a" style="left:424px;top:35px;width:1px;height:1px;background:#7d8189"></div><div class="a" style="left:424px;top:39px;width:1px;height:1px;background:#7d8189"></div>
<div class="a" style="left:547px;top:8px;width:1px;height:1px;background:#7d8189"></div><div class="a" style="left:547px;top:12px;width:1px;height:1px;background:#7d8189"></div><div class="a" style="left:547px;top:17px;width:1px;height:1px;background:#7d8189"></div><div class="a" style="left:547px;top:21px;width:1px;height:1px;background:#7d8189"></div><div class="a" style="left:547px;top:26px;width:1px;height:1px;background:#7d8189"></div><div class="a" style="left:547px;top:30px;width:1px;height:1px;background:#7d8189"></div><div class="a" style="left:547px;top:35px;width:1px;height:1px;background:#7d8189"></div><div class="a" style="left:547px;top:39px;width:1px;height:1px;background:#7d8189"></div>
<div class="a" style="left:1444px;top:8px;width:1px;height:1px;background:#7d8189"></div><div class="a" style="left:1444px;top:12px;width:1px;height:1px;background:#7d8189"></div><div class="a" style="left:1444px;top:17px;width:1px;height:1px;background:#7d8189"></div><div class="a" style="left:1444px;top:21px;width:1px;height:1px;background:#7d8189"></div><div class="a" style="left:1444px;top:26px;width:1px;height:1px;background:#7d8189"></div><div class="a" style="left:1444px;top:30px;width:1px;height:1px;background:#7d8189"></div><div class="a" style="left:1444px;top:35px;width:1px;height:1px;background:#7d8189"></div><div class="a" style="left:1444px;top:39px;width:1px;height:1px;background:#7d8189"></div>
<svg class="a" style="left:439px;top:14px" width="21" height="22" viewBox="0 0 21 22" shape-rendering="crispEdges">
<rect x="0" y="0" width="20" height="21" fill="#8a8a8a"/>
<rect x="5" y="2" width="10" height="8" fill="#d9dbe0"/>
<rect x="2" y="1" width="1" height="19" fill="#9c9c9c"/>
<rect x="5" y="14" width="10" height="7" fill="#7a7a7a"/>
<rect x="12" y="15" width="3" height="5" fill="#d9dbe0"/>
<rect x="17" y="2" width="1" height="1" fill="#e0e0e0"/>
</svg>
<svg class="a" style="left:477px;top:12px" width="22" height="24" viewBox="0 0 22 24" shape-rendering="crispEdges">
<rect x="0" y="0" width="16" height="20" fill="#000"/>
<rect x="1" y="2" width="14" height="16" fill="#808000"/>
<rect x="3" y="2" width="9" height="8" fill="#d8dae0"/>
<rect x="3" y="12" width="10" height="8" fill="#000"/>
<rect x="9" y="13" width="3" height="6" fill="#e0e0e0"/>
<rect x="13" y="2" width="2" height="2" fill="#fff"/>
<rect x="7" y="22" width="3" height="1" fill="#000"/>
<rect x="12" y="22" width="3" height="1" fill="#000"/>
<rect x="16" y="22" width="3" height="1" fill="#000"/>
</svg>
<svg class="a" style="left:508px;top:12px" width="28" height="25" viewBox="0 0 28 25" shape-rendering="crispEdges">
<defs><pattern id="chk" patternUnits="userSpaceOnUse" x="1" y="2" width="3" height="3"><rect width="3" height="3" fill="#000"/><rect width="2" height="2" fill="#fbf470"/></pattern>
<linearGradient id="dg" x1="0" y1="0" x2="1" y2="1"><stop offset="0" stop-color="#fff"/><stop offset="0.6" stop-color="#fff"/><stop offset="1" stop-color="#b8b0f0"/></linearGradient></defs>
<rect x="1" y="7" width="19" height="16" fill="#3a2a9c"/>
<rect x="3" y="8" width="15" height="13" fill="url(#dg)"/>
<rect x="5" y="16" width="3" height="1" fill="#000"/><rect x="9" y="16" width="8" height="1" fill="#000"/>
<rect x="5" y="19" width="3" height="1" fill="#000"/><rect x="9" y="19" width="8" height="1" fill="#000"/>
<rect x="24" y="3" width="2" height="9" fill="#a8aab0"/>
<rect x="12" y="2" width="9" height="1" fill="#000"/>
<rect x="22" y="2" width="2" height="9" fill="#000"/>
<rect x="12" y="3" width="10" height="7" fill="#fbf480"/>
<rect x="21" y="4" width="1" height="1" fill="#000"/><rect x="21" y="8" width="1" height="1" fill="#000"/>
<rect x="17" y="10" width="5" height="1" fill="#000"/>
<path d="M5,10 L8,7 L9,5 L11,4 L13,4 L13,5 L17,8 L17,11 L15,12 L15,14 L13,14 L12,12 L8,12 L5,12 Z" fill="url(#chk)"/>
</svg>
<svg class="a" style="left:561px;top:12px" width="24" height="24" viewBox="0 0 24 24" shape-rendering="crispEdges">
<path d="M6,5 H10 V6 H12 V7 H14 V8 H16 V10 H17 V12 H18 V18 H17 V20 H16 V21 H14 V22 H13 V23 H7 V22 H6 V21 H4 V19 H3 V17 H1 V10 H3 V8 H4 V7 H5 V6 H6 Z" fill="#000"/>
<path d="M6,6 H10 V7 H12 V8 H14 V9 H15 V11 H16 V12 H17 V18 H16 V20 H15 V21 H13 V22 H7 V21 H6 V20 H5 V19 H4 V17 H3 V10 H4 V8 H5 V7 H6 Z" fill="#0000f8"/>
<rect x="4" y="8" width="2" height="2" fill="#00f000"/><rect x="6" y="7" width="1" height="1" fill="#00f000"/>
<rect x="4" y="13" width="5" height="6" fill="#00f000"/><rect x="6" y="19" width="1" height="1" fill="#00f000"/>
<rect x="10" y="13" width="4" height="4" fill="#00f000"/><rect x="12" y="17" width="3" height="2" fill="#00f000"/>
<rect x="16" y="11" width="2" height="5" fill="#00f000"/>
<rect x="4" y="11" width="2" height="2" fill="#000"/><rect x="15" y="18" width="2" height="2" fill="#000"/>
<rect x="12" y="2" width="9" height="2" fill="#000"/>
<rect x="22" y="2" width="2" height="9" fill="#000"/>
<rect x="12" y="4" width="10" height="6" fill="#fbf48a"/>
<rect x="18" y="10" width="6" height="1" fill="#000"/>
<rect x="10" y="4" width="2" height="1" fill="#000"/>
<rect x="10" y="5" width="2" height="2" fill="#fbf48a"/><rect x="12" y="5" width="1" height="2" fill="#000"/>
<rect x="8" y="7" width="2" height="2" fill="#fbf48a"/><rect x="10" y="7" width="1" height="2" fill="#000"/><rect x="11" y="7" width="2" height="2" fill="#fbf48a"/><rect x="13" y="7" width="1" height="2" fill="#000"/><rect x="14" y="7" width="2" height="2" fill="#fbf48a"/>
<rect x="7" y="7" width="1" height="3" fill="#000"/><rect x="6" y="9" width="1" height="2" fill="#fbf48a"/>
<rect x="8" y="9" width="8" height="1" fill="#000"/>
<rect x="12" y="10" width="1" height="1" fill="#000"/><rect x="13" y="10" width="3" height="3" fill="#fbf48a"/><rect x="16" y="10" width="1" height="2" fill="#000"/>
<rect x="13" y="13" width="3" height="1" fill="#000"/>
</svg>
<div class="a" style="left:598px;top:16px;width:18px;height:16px;border-left:2px solid #181818;border-top:1px solid #222;border-right:1px solid #222;border-bottom:1px solid #222;background:linear-gradient(135deg,#7592e0,#3a58b8 45%,#0a2aa0);box-shadow:2px 2px 1px #c4c7cc"></div>
<div class="a" style="left:603px;top:20px;width:1px;height:2px;background:#f0e000"></div><div class="a" style="left:604px;top:20px;width:2px;height:2px;background:#60c8d8"></div>
<div class="a" style="left:630px;top:8px;width:768px;height:33px;border:1px solid #8a8e96;border-radius:7px;border-bottom:1px solid #5c6068;background:linear-gradient(#fdfdfd 8%,#f4f4f6 20%,#e4e5e9 45%,#dfe0e4 70%,#eceef2 82%,#f2f3f6 95%);box-shadow:0 1px 0 #c4c7cd"></div>
<div class="a" style="left:1372px;top:8px;width:26px;height:33px;border:2px solid #34495f;border-top:1px solid #4d6279;border-left:1px solid #8ba0b6;border-radius:0 7px 7px 0;background:linear-gradient(#f0f4f8,#cdd9e4 35%,#a9bcd0 60%,#b9cde0 95%)"></div>
<svg class="a" style="left:1379px;top:19px" width="12" height="10" viewBox="0 0 12 10"><path d="M0.5,0.5 L11,0.5 L5.75,9 Z" fill="#1a1a1a"/></svg>
<svg class="a" style="left:640px;top:13px" width="21" height="22" viewBox="0 0 21 22" shape-rendering="crispEdges">
<rect x="5" y="0" width="13" height="2" fill="#dcaa28"/>
<rect x="3" y="2" width="2" height="18" fill="#cfa22a"/>
<rect x="18" y="2" width="2" height="18" fill="#dfae2c"/>
<rect x="5" y="2" width="13" height="7" fill="#f7df72"/>
<rect x="6" y="3" width="7" height="5" fill="#fff6c8"/>
<rect x="7" y="4" width="3" height="3" fill="#fffff4"/>
<rect x="5" y="8" width="13" height="11" fill="#f2c64c"/>
<rect x="5" y="8" width="4" height="6" fill="#f6c79c"/>
<rect x="5" y="19" width="13" height="2" fill="#dcaa28"/>
<rect x="11" y="9" width="4" height="2" fill="#5058a8"/>
<rect x="10" y="10" width="1" height="2" fill="#8a92cc"/>
<rect x="9" y="12" width="1" height="2" fill="#8a92cc"/>
<rect x="10" y="11" width="5" height="8" fill="#f8f8ff"/>
<rect x="9" y="14" width="1" height="5" fill="#f0f0ff"/>
<rect x="15" y="11" width="3" height="8" fill="#4aa8f0"/>
<rect x="15" y="14" width="3" height="1" fill="#80f6ff"/>
<rect x="15" y="18" width="3" height="1" fill="#343c90"/>
<rect x="9" y="18" width="6" height="2" fill="#7078b8"/>
<rect x="0" y="14" width="9" height="1" fill="#a4a8d6"/>
<rect x="0" y="15" width="2" height="6" fill="#a4a8d6"/>
<rect x="2" y="15" width="7" height="2" fill="#e6e8f8"/>
<rect x="3" y="17" width="6" height="1" fill="#5058a0"/>
<rect x="3" y="18" width="2" height="2" fill="#5058a0"/>
<rect x="5" y="18" width="4" height="1" fill="#f6c050"/>
</svg>
<div class="t" style="left:669px;top:13px">/ElixirSamples/DataSource/FruitSales.ds</div>
<svg class="a" style="left:1404px;top:10px" width="30" height="30" viewBox="1404 10 30 30"><path d="M1407.5,13.5 L1416.5,13.5 L1418.3,19 L1420.2,13.5 L1429,13.5 L1423,25 L1429,36.5 L1420.2,36.5 L1418.3,31 L1416.5,36.5 L1407.5,36.5 L1413.6,25 Z" fill="#f27884" opacity="0.8"/><path d="M1409,15 L1415.5,15 L1418.3,21 L1421.2,15 L1427.5,15 L1421.6,25 L1427.5,35 L1421.2,35 L1418.3,29 L1415.5,35 L1409,35 L1415,25 Z" fill="#ee3446" opacity="0.55"/><path d="M1411,16.5 L1414.5,16.5 L1418.3,23.5 L1422,16.5 L1425.5,16.5 L1420.5,25 L1425.5,33.5 L1422,33.5 L1418.3,26.5 L1414.5,33.5 L1411,33.5 L1416.1,25 Z" fill="#fff"/></svg>
<svg class="a" style="left:1453px;top:11px" width="28" height="27" viewBox="0 0 28 27" shape-rendering="crispEdges">
<defs><linearGradient id="gb" x1="0" x2="1"><stop offset="0" stop-color="#9ea0f8"/><stop offset="0.5" stop-color="#3030e8"/><stop offset="1" stop-color="#2020e0"/></linearGradient>
<linearGradient id="gk" x1="0" y1="0" x2="1" y2="1"><stop offset="0" stop-color="#555"/><stop offset="1" stop-color="#000"/></linearGradient></defs>
<rect x="0" y="0" width="27" height="23" fill="url(#gk)"/>
<rect x="2" y="1" width="7" height="21" fill="#777" opacity="0.8"/><rect x="11" y="1" width="7" height="21" fill="#777" opacity="0.8"/><rect x="20" y="1" width="6" height="21" fill="#777" opacity="0.8"/><rect x="2" y="2" width="7" height="1" fill="#fff"/><rect x="11" y="2" width="7" height="1" fill="#fff"/><rect x="20" y="2" width="6" height="1" fill="#fff"/><rect x="2" y="5" width="7" height="1" fill="#fff"/><rect x="11" y="5" width="7" height="1" fill="#fff"/><rect x="20" y="5" width="6" height="1" fill="#fff"/><rect x="2" y="8" width="7" height="1" fill="#fff"/><rect x="11" y="8" width="7" height="1" fill="#fff"/><rect x="20" y="8" width="6" height="1" fill="#fff"/><rect x="2" y="11" width="7" height="1" fill="#fff"/><rect x="11" y="11" width="7" height="1" fill="#fff"/><rect x="20" y="11" width="6" height="1" fill="#fff"/><rect x="2" y="14" width="7" height="1" fill="#fff"/><rect x="11" y="14" width="7" height="1" fill="#fff"/><rect x="20" y="14" width="6" height="1" fill="#fff"/><rect x="2" y="17" width="7" height="1" fill="#fff"/><rect x="11" y="17" width="7" height="1" fill="#fff"/><rect x="20" y="17" width="6" height="1" fill="#fff"/><rect x="2" y="20" width="7" height="1" fill="#fff"/><rect x="11" y="20" width="7" height="1" fill="#fff"/><rect x="20" y="20" width="6" height="1" fill="#fff"/>
<rect x="0" y="24" width="27" height="3" fill="url(#gb)"/>
</svg>
<div class="a" style="left:381px;top:96px;width:287px;height:33px;border:1px solid #8a8e96;border-radius:7px;border-bottom:1px solid #5c6068;background:linear-gradient(#fdfdfd 8%,#f4f4f6 20%,#e4e5e9 45%,#dfe0e4 70%,#eceef2 82%,#f2f3f6 95%);box-shadow:0 1px 0 #c4c7cd"></div>
<div class="a" style="left:641px;top:96px;width:27px;height:33px;border:2px solid #34495f;border-top:1px solid #4d6279;border-left:1px solid #8ba0b6;border-radius:0 7px 7px 0;background:linear-gradient(#f0f4f8,#cdd9e4 35%,#a9bcd0 60%,#b9cde0 95%)"></div>
<svg class="a" style="left:649px;top:108px" width="12" height="10" viewBox="0 0 12 10"><path d="M0.5,0.5 L11,0.5 L5.75,9 Z" fill="#1a1a1a"/></svg>
<div class="t" style="left:390px;top:103px">DataStore: FruitSales (Result)</div>
<svg class="a" style="left:676px;top:101px" width="24" height="24" viewBox="0 0 24 24" shape-rendering="crispEdges">
<defs><linearGradient id="ty" x1="0" y1="0" x2="1" y2="1"><stop offset="0" stop-color="#c8c8a0"/><stop offset="0.5" stop-color="#a8a860"/><stop offset="1" stop-color="#e8e030"/></linearGradient></defs>
<rect x="0" y="0" width="24" height="24" fill="#fff"/>
<rect x="2" y="2" width="21" height="21" fill="#000"/>
<rect x="5" y="5" width="16" height="3" fill="#3040d8"/>
<rect x="5" y="8" width="16" height="13" fill="url(#ty)"/>
<rect x="5" y="5" width="3" height="1" fill="#9ef" opacity="0.85"/><rect x="9" y="5" width="3" height="1" fill="#9ef" opacity="0.85"/><rect x="14" y="5" width="3" height="1" fill="#9ef" opacity="0.85"/><rect x="18" y="5" width="3" height="1" fill="#9ef" opacity="0.85"/><rect x="5" y="8" width="3" height="1" fill="#ffffc0" opacity="0.85"/><rect x="9" y="8" width="3" height="1" fill="#ffffc0" opacity="0.85"/><rect x="14" y="8" width="3" height="1" fill="#ffffc0" opacity="0.85"/><rect x="18" y="8" width="3" height="1" fill="#ffffc0" opacity="0.85"/><rect x="5" y="11" width="3" height="1" fill="#ffffc0" opacity="0.85"/><rect x="9" y="11" width="3" height="1" fill="#ffffc0" opacity="0.85"/><rect x="14" y="11" width="3" height="1" fill="#ffffc0" opacity="0.85"/><rect x="18" y="11" width="3" height="1" fill="#ffffc0" opacity="0.85"/><rect x="5" y="14" width="3" height="1" fill="#ffffc0" opacity="0.85"/><rect x="9" y="14" width="3" height="1" fill="#ffffc0" opacity="0.85"/><rect x="14" y="14" width="3" height="1" fill="#ffffc0" opacity="0.85"/><rect x="18" y="14" width="3" height="1" fill="#ffffc0" opacity="0.85"/><rect x="5" y="17" width="3" height="1" fill="#ffffc0" opacity="0.85"/><rect x="9" y="17" width="3" height="1" fill="#ffffc0" opacity="0.85"/><rect x="14" y="17" width="3" height="1" fill="#ffffc0" opacity="0.85"/><rect x="18" y="17" width="3" height="1" fill="#ffffc0" opacity="0.85"/><rect x="5" y="20" width="3" height="1" fill="#ffffc0" opacity="0.85"/><rect x="9" y="20" width="3" height="1" fill="#ffffc0" opacity="0.85"/><rect x="14" y="20" width="3" height="1" fill="#ffffc0" opacity="0.85"/><rect x="18" y="20" width="3" height="1" fill="#ffffc0" opacity="0.85"/>
</svg>
<svg class="a" style="left:712px;top:99px" width="26" height="28" viewBox="0 0 26 28" shape-rendering="crispEdges">
<path d="M9,2 H15 V4 H17 V10 H20 V11 H21 V13 H23 V20 H21 V22 H20 V24 H15 V25 H9 V24 H5 V22 H3 V20 H2 V13 H3 V11 H5 V10 H8 V4 H9 Z" fill="#a6a6a6"/>
<rect x="10" y="5" width="5" height="10" fill="#acacac"/>
</svg>
<svg class="a" style="left:750px;top:103px" width="19" height="21" viewBox="0 0 19 21" shape-rendering="crispEdges">
<rect x="0" y="0" width="19" height="21" fill="#000"/>
<rect x="1" y="1" width="17" height="16" fill="#808000"/>
<rect x="4" y="1" width="10" height="9" fill="#000"/>
<rect x="4" y="2" width="9" height="7" fill="#d8dae0"/>
<rect x="16" y="1" width="2" height="2" fill="#fff"/>
<rect x="4" y="11" width="11" height="10" fill="#000"/>
<rect x="11" y="15" width="3" height="4" fill="#e8e8e8"/>
</svg>
<svg class="a" style="left:782px;top:101px" width="28" height="24" viewBox="0 0 28 24" shape-rendering="crispEdges">
<defs><linearGradient id="pg" x1="0" y1="0" x2="1" y2="0"><stop offset="0" stop-color="#c8d4f8"/><stop offset="0.4" stop-color="#fff"/></linearGradient>
<linearGradient id="pb" x1="0" y1="0" x2="1" y2="0"><stop offset="0" stop-color="#9a9a9a"/><stop offset="0.5" stop-color="#303030"/><stop offset="1" stop-color="#000"/></linearGradient></defs>
<rect x="10" y="3" width="13" height="2" fill="#000"/>
<rect x="22" y="4" width="1" height="2" fill="#000"/>
<rect x="8" y="5" width="13" height="7" fill="url(#pg)"/><rect x="22" y="11" width="3" height="1" fill="#fff"/>
<rect x="8" y="5" width="2" height="3" fill="#000"/>
<rect x="7" y="8" width="2" height="3" fill="#000"/>
<rect x="11" y="6" width="8" height="2" fill="#0a1850"/>
<rect x="10" y="9" width="7" height="2" fill="#0a1850"/>
<rect x="20" y="6" width="2" height="4" fill="#000"/>
<rect x="19" y="9" width="6" height="2" fill="#000"/>
<rect x="4" y="12" width="19" height="2" fill="#000"/>
<rect x="6" y="11" width="2" height="1" fill="#000"/>
<rect x="2" y="14" width="21" height="7" fill="#000"/>
<rect x="3" y="14" width="19" height="2" fill="url(#pb)"/>
<rect x="4" y="17" width="16" height="3" fill="#b8b8b8"/>
<rect x="14" y="17" width="3" height="3" fill="#90f030"/>
<rect x="23" y="11" width="2" height="8" fill="#000"/>
<rect x="23" y="14" width="2" height="2" fill="#d0d0d0"/>
</svg>
<svg class="a" style="left:818px;top:100px" width="30" height="26" viewBox="0 0 30 26" shape-rendering="crispEdges">
<path d="M4,3 H13 V4 H14 V6 H15 V18 H4 Z" fill="#8e8e8e"/>
<path d="M5,4 H12 V5 H13 V7 H14 V17 H5 Z" fill="#a9a9a9"/>
<rect x="7" y="8" width="4" height="1" fill="#9a9a9a"/><rect x="7" y="11" width="5" height="1" fill="#9a9a9a"/><rect x="7" y="14" width="5" height="1" fill="#9a9a9a"/>
<rect x="14" y="23" width="11" height="1" fill="#c4c6cc"/>
<path d="M13,7 H22 V9 H23 V10 H25 V22 H13 Z" fill="#8c8c8c"/>
<path d="M14,8 H21 V12 H24 V21 H14 Z" fill="#b3b3b3"/>
<rect x="22" y="10" width="1" height="2" fill="#d8d8d8"/>
<rect x="16" y="12" width="3" height="1" fill="#7e7e7e"/><rect x="16" y="15" width="6" height="1" fill="#7e7e7e"/><rect x="16" y="18" width="6" height="1" fill="#7e7e7e"/>
</svg>
<div class="t" style="left:850px;top:103px">Showing 11 records</div>
<div class="a" style="left:1012px;top:103px;width:21px;height:21px;border:2px solid #7a7e87;border-top-color:#80848c;border-radius:4px;background:linear-gradient(#fafbfc,#e8e9ed 55%,#dfe1e6 60%,#eceef2);box-shadow:0 1px 1px #c4c7cd"></div>
<div class="t" style="left:1042px;top:103px">Count All Records</div>
<!-- tab strip -->
<div class="a" style="left:377px;top:86px;width:1107px;height:2px;background:#25313d"></div>
<div class="a" style="left:377px;top:88px;width:1107px;height:4px;background:#bccee0"></div>
<div class="a" style="left:377px;top:92px;width:1107px;height:1px;background:#4f5d6b"></div>
<div class="a" style="left:392px;top:53px;width:63px;height:35px;border:2px solid #1e2d3c;border-bottom:none;border-radius:7px 7px 0 0;background:linear-gradient(#f1f4f8,#c9d6e2 45%,#a8bdd2 80%,#b4c8dc)"></div>
<div class="t" style="left:405px;top:59px">Data</div>

<!-- data toolbar line -->
<div class="a" style="left:377px;top:131px;width:1107px;height:1px;background:#9297a1"></div>

<!-- table -->
<div class="a" style="left:381px;top:136px;width:1px;height:586px;background:#8e939b"></div>
<div class="a" style="left:381px;top:135px;width:1100px;height:1px;background:#b4b8c0"></div>
<div class="a" style="left:381px;top:136px;width:1100px;height:1px;background:#8e939b"></div>
<div class="a" style="left:1480px;top:136px;width:1px;height:586px;background:#8e939b"></div>
<div class="a" style="left:1479px;top:137px;width:1px;height:585px;background:#dde0e6"></div>
<div class="a" style="left:382px;top:137px;width:591px;height:56px;background:linear-gradient(#f3f4f6,#e8e9ed 25%,#dfe1e5 55%,#d9dce1 80%,#e3e5e9 90%,#f2f3f5)"></div>
<div class="a" style="left:382px;top:193px;width:591px;height:1px;background:#7e838b"></div>
<div class="t" style="left:390px;top:142px;text-align:center">Company<br>(String)</div>
<div class="a" style="left:483px;top:137px;width:1px;height:56px;background:linear-gradient(#c4c7cd,#8f949c 20%,#8f949c 80%,#c4c7cd)"></div>
<div class="t" style="left:492px;top:142px;text-align:center">Fruit<br>(String)</div>
<div class="a" style="left:594px;top:137px;width:1px;height:56px;background:linear-gradient(#c4c7cd,#8f949c 20%,#8f949c 80%,#c4c7cd)"></div>
<div class="t" style="left:603px;top:142px;text-align:center">2000<br>(Double)</div>
<div class="a" style="left:688px;top:137px;width:1px;height:56px;background:linear-gradient(#c4c7cd,#8f949c 20%,#8f949c 80%,#c4c7cd)"></div>
<div class="t" style="left:697px;top:142px;text-align:center">1999<br>(Double)</div>
<div class="a" style="left:783px;top:137px;width:1px;height:56px;background:linear-gradient(#c4c7cd,#8f949c 20%,#8f949c 80%,#c4c7cd)"></div>
<div class="t" style="left:792px;top:142px;text-align:center">1998<br>(Double)</div>
<div class="a" style="left:877px;top:137px;width:1px;height:56px;background:linear-gradient(#c4c7cd,#8f949c 20%,#8f949c 80%,#c4c7cd)"></div>
<div class="t" style="left:886px;top:142px;text-align:center">1997<br>(Double)</div>
<div class="a" style="left:972px;top:137px;width:1px;height:56px;background:linear-gradient(#c4c7cd,#8f949c 20%,#8f949c 80%,#c4c7cd)"></div>
<div class="a" style="left:382px;top:194px;width:591px;height:24px;background:#fff"></div>
<div class="t" style="left:390px;top:196px">A</div>
<div class="t" style="left:492px;top:196px">Apple</div>
<div class="t" style="left:603px;top:196px">201.0</div>
<div class="t" style="left:697px;top:196px">102.0</div>
<div class="t" style="left:792px;top:196px">199.0</div>
<div class="t" style="left:886px;top:196px">232.0</div>
<div class="a" style="left:382px;top:218px;width:591px;height:24px;background:#f2f2f2"></div>
<div class="t" style="left:390px;top:220px">A</div>
<div class="t" style="left:492px;top:220px">Orange</div>
<div class="t" style="left:603px;top:220px">323.0</div>
<div class="t" style="left:697px;top:220px">32.0</div>
<div class="t" style="left:792px;top:220px">55.0</div>
<div class="t" style="left:886px;top:220px">23.0</div>
<div class="a" style="left:382px;top:242px;width:591px;height:24px;background:#fff"></div>
<div class="t" style="left:390px;top:244px">A</div>
<div class="t" style="left:492px;top:244px">Strawberry</div>
<div class="t" style="left:603px;top:244px">99.0</div>
<div class="t" style="left:697px;top:244px">20.0</div>
<div class="t" style="left:792px;top:244px">39.0</div>
<div class="t" style="left:886px;top:244px">23.0</div>
<div class="a" style="left:382px;top:266px;width:591px;height:24px;background:#f2f2f2"></div>
<div class="t" style="left:390px;top:268px">B</div>
<div class="t" style="left:492px;top:268px">Apple</div>
<div class="t" style="left:603px;top:268px">201.0</div>
<div class="t" style="left:697px;top:268px">102.0</div>
<div class="t" style="left:792px;top:268px">199.0</div>
<div class="t" style="left:886px;top:268px">232.0</div>
<div class="a" style="left:382px;top:290px;width:591px;height:24px;background:#fff"></div>
<div class="t" style="left:390px;top:292px">B</div>
<div class="t" style="left:492px;top:292px">Orange</div>
<div class="t" style="left:603px;top:292px">323.0</div>
<div class="t" style="left:697px;top:292px">32.0</div>
<div class="t" style="left:792px;top:292px">55.0</div>
<div class="t" style="left:886px;top:292px">23.0</div>
<div class="a" style="left:382px;top:314px;width:591px;height:24px;background:#f2f2f2"></div>
<div class="t" style="left:390px;top:316px">B</div>
<div class="t" style="left:492px;top:316px">Strawberry</div>
<div class="t" style="left:603px;top:316px">99.0</div>
<div class="t" style="left:697px;top:316px">20.0</div>
<div class="t" style="left:792px;top:316px">39.0</div>
<div class="t" style="left:886px;top:316px">70.0</div>
<div class="a" style="left:382px;top:338px;width:591px;height:24px;background:#fff"></div>
<div class="t" style="left:390px;top:340px">B</div>
<div class="t" style="left:492px;top:340px">Berry</div>
<div class="t" style="left:603px;top:340px">23.0</div>
<div class="t" style="left:697px;top:340px">32.0</div>
<div class="t" style="left:792px;top:340px">34.0</div>
<div class="t" style="left:886px;top:340px">76.0</div>
<div class="a" style="left:382px;top:362px;width:591px;height:24px;background:#f2f2f2"></div>
<div class="t" style="left:390px;top:364px">C</div>
<div class="t" style="left:492px;top:364px">Apple</div>
<div class="t" style="left:603px;top:364px">120.0</div>
<div class="t" style="left:697px;top:364px">232.0</div>
<div class="t" style="left:792px;top:364px">232.0</div>
<div class="t" style="left:886px;top:364px">322.0</div>
<div class="a" style="left:382px;top:386px;width:591px;height:24px;background:#fff"></div>
<div class="t" style="left:390px;top:388px">C</div>
<div class="t" style="left:492px;top:388px">Orange</div>
<div class="t" style="left:603px;top:388px">323.0</div>
<div class="t" style="left:697px;top:388px">32.0</div>
<div class="t" style="left:792px;top:388px">43.0</div>
<div class="t" style="left:886px;top:388px">787.0</div>
<div class="a" style="left:382px;top:410px;width:591px;height:24px;background:#f2f2f2"></div>
<div class="t" style="left:390px;top:412px">C</div>
<div class="t" style="left:492px;top:412px">Strawberry</div>
<div class="t" style="left:603px;top:412px">122.0</div>
<div class="t" style="left:697px;top:412px">2.0</div>
<div class="t" style="left:792px;top:412px">2.0</div>
<div class="t" style="left:886px;top:412px">70.0</div>
<div class="a" style="left:382px;top:434px;width:591px;height:24px;background:#fff"></div>
<div class="t" style="left:390px;top:436px">C</div>
<div class="t" style="left:492px;top:436px">Berry</div>
<div class="t" style="left:603px;top:436px">343.0</div>
<div class="t" style="left:697px;top:436px">232.0</div>
<div class="t" style="left:792px;top:436px">23.0</div>
<div class="t" style="left:886px;top:436px">332.0</div>

<!-- black vertical line -->
<div class="a" style="left:271px;top:0;width:4px;height:722px;background:#000"></div>
<!-- red arrow -->
<svg class="a" style="left:260px;top:380px" width="110" height="65" viewBox="260 380 110 65">
<path d="M271.3,412 Q271.3,411 272.5,410.3 L315.5,387 Q319.7,385 319.7,389.5 L319.7,398 L362.6,398 L362.6,426 L319.7,426 L319.7,434.5 Q319.7,439 315.5,437 L272.5,413.7 Q271.3,413 271.3,412 Z" fill="#ed1c24"/>
</svg>
</body></html>
